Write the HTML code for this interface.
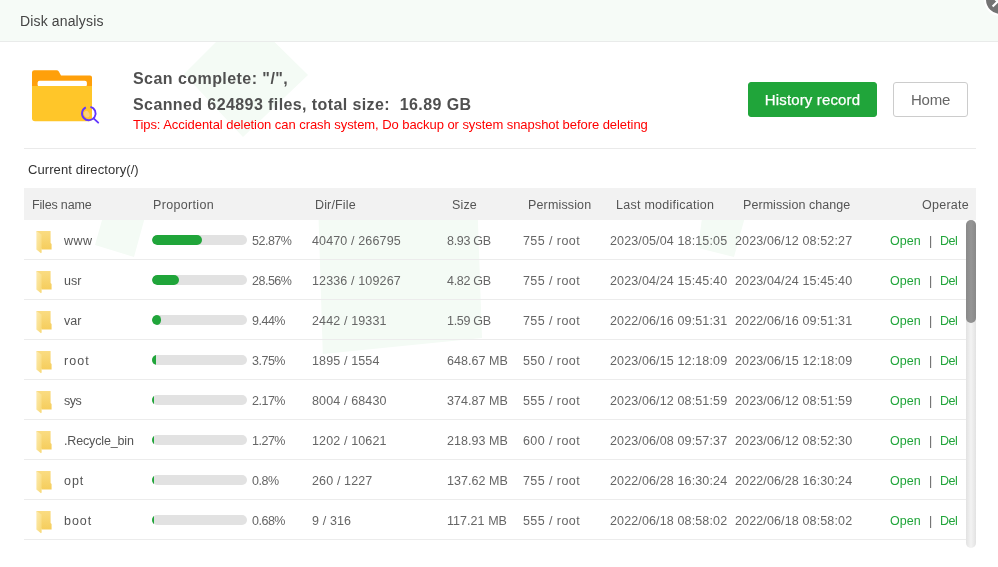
<!DOCTYPE html>
<html><head><meta charset="utf-8">
<style>
*{margin:0;padding:0;box-sizing:border-box}
html,body{width:998px;height:567px;overflow:hidden;background:#fff;font-family:"Liberation Sans",sans-serif;}
.abs{position:absolute;white-space:nowrap}
#hdr{position:absolute;left:0;top:0;width:998px;height:42px;background:#f6fbf7;border-bottom:1px solid #e9ebea}
#title{left:20px;top:13px;font-size:14px;color:#444;line-height:16px}
#close{position:absolute;left:983.5px;top:-17px;width:33px;height:33px;border-radius:50%;background:#737373;border:2.5px solid #fff}
.l1{left:133px;font-size:16px;font-weight:bold;color:#505050;line-height:18px}
.tips{left:133px;top:118px;font-size:13px;color:#ff0000;line-height:14px}
.btn{position:absolute;top:82px;height:35px;border-radius:3px;font-size:15px;line-height:33px;text-align:center}
#hist{left:748px;width:129px;background:#20a53a;color:#fff;border:1px solid #20a53a;letter-spacing:0.15px;-webkit-text-stroke:0.25px #fff}
#home{left:893px;width:75px;background:#fff;color:#666;border:1px solid #ccc;letter-spacing:-0.2px}
#sep{position:absolute;left:24px;top:148px;width:952px;height:1px;background:#eaeaea}
#cur{left:28px;top:163px;font-size:13px;color:#333;line-height:14px}
#thead{position:absolute;left:24px;top:188px;width:952px;height:32px;background:#f2f2f2}
.th{top:198px;font-size:12.5px;color:#555;line-height:14px}
.row{position:absolute;left:24px;width:942px;height:40px;border-bottom:1px solid #ececec}
.td{font-size:12.5px;color:#666;line-height:14px}
.bar{position:absolute;left:152px;width:95px;height:10px;border-radius:5px;background:#e2e2e2;overflow:hidden}
.bar i{position:absolute;left:0;top:0;height:10px;border-radius:5px;background:#20a53a}
.op{color:#20a53a}
.pipe{color:#666}
#sb{position:absolute;left:966px;top:220px;width:10px;height:328px;border-radius:5px;background:linear-gradient(to right,#e2e2e2,#f1f1f1 45%,#f1f1f1 55%,#e2e2e2)}
#thumb{position:absolute;left:966px;top:220px;width:10px;height:103px;border-radius:5px;background:linear-gradient(to right,#898989,#959595 50%,#898989)}
</style></head><body><div id="wrap" style="position:absolute;left:0;top:0;width:998px;height:567px;overflow:hidden;will-change:transform">
<svg width="0" height="0" style="position:absolute"><defs>
<linearGradient id="fb" x1="0" y1="0" x2="0" y2="1"><stop offset="0" stop-color="#fadc82"/><stop offset="1" stop-color="#f5cd5c"/></linearGradient>
<linearGradient id="ff" x1="0" y1="0" x2="1" y2="1"><stop offset="0" stop-color="#fdebb0"/><stop offset="1" stop-color="#f8d874"/></linearGradient>
</defs></svg>
<svg class="abs" style="left:0;top:0" width="998" height="567" viewBox="0 0 998 567"><g fill="#f4fbf5">
<polygon points="184,74 245,13 308,75 243,137"/>
<polygon points="111,188 153,188 134,257 95,245"/>
<polygon points="706,188 753,188 734,257 698,248"/>
<polygon points="318,200 477.2,200 482,338 322.8,354"/>
</g></svg>
<div id="hdr"></div>

<div id="close"></div>
<svg class="abs" style="left:985px;top:0" width="13" height="10" viewBox="985 0 13 10"><path d="M992.6 6.6 L1000 -0.8 M993.5 -2.5 L996.8 0.8" stroke="#fff" stroke-width="2.1"/></svg>

<!-- big folder icon -->
<svg class="abs" style="left:28px;top:64px" width="74" height="64" viewBox="28 64 74 64">
  <path d="M32 72.5 Q32 70.2 34.3 70.2 L56.5 70.2 Q58 70.2 58.8 71.6 L61 75.6 L90 75.6 Q92 75.6 92 77.6 L92 90 L32 90 Z" fill="#ffa00a"/>
  <rect x="37.6" y="80.7" width="49.3" height="6" rx="2" fill="#fff"/>
  <path d="M32 86 L92 86 L92 118.3 Q92 121.3 89 121.3 L35 121.3 Q32 121.3 32 118.3 Z" fill="#ffc629"/>
  <ellipse cx="86.8" cy="114.2" rx="2.6" ry="3.4" transform="rotate(-30 86.8 114.2)" fill="#fbd079"/>
  <path d="M90.45 106.8 A6.8 6.8 0 1 1 85.82 107.29" fill="none" stroke="#6236ff" stroke-width="1.9"/>
  <line x1="93.6" y1="118.4" x2="98.2" y2="122.6" stroke="#6236ff" stroke-width="1.9" stroke-linecap="round"/>
</svg>

<div class="abs" id="title" style="letter-spacing:0.142px">Disk analysis</div>
<div class="abs l1" style="top:70px;letter-spacing:0.444px">Scan complete: "/",</div>
<div class="abs l1" style="top:96px;letter-spacing:0.405px">Scanned 624893 files, total size:&nbsp; 16.89 GB</div>
<div class="abs tips" style="letter-spacing:-0.057px">Tips: Accidental deletion can crash system, Do backup or system snapshot before deleting</div>
<div class="abs" id="cur" style="letter-spacing:0.084px">Current directory(/)</div>

<div class="btn" id="hist">History record</div>
<div class="btn" id="home">Home</div>

<div id="sep"></div>


<div id="thead"></div>
<div class="abs th" style="left:32px;letter-spacing:-0.167px;">Files name</div>
<div class="abs th" style="left:153px;letter-spacing:0.333px;">Proportion</div>
<div class="abs th" style="left:315px;letter-spacing:0.15px;">Dir/File</div>
<div class="abs th" style="left:452px;letter-spacing:0.15px;">Size</div>
<div class="abs th" style="left:528px;letter-spacing:0.15px;">Permission</div>
<div class="abs th" style="left:616px;letter-spacing:0.263px;">Last modification</div>
<div class="abs th" style="left:743px;letter-spacing:0.062px;">Permission change</div>
<div class="abs th" style="left:922px;letter-spacing:0.25px;">Operate</div>

<div class="row" style="top:220px"></div>
<svg class="abs" style="left:36px;top:231px" width="16" height="23" viewBox="0 0 16 23"><path d="M0.4 0 L14.6 0 L14.6 12 L15.6 13 L15.6 18.6 L5.5 18.6 Z" fill="url(#fb)"/><path d="M0.4 0 L5.6 3.4 L5.6 21.6 L5 22.3 L0.4 18.6 Z" fill="url(#ff)"/></svg>
<div class="abs td" style="left:64px;top:234px;color:#555;letter-spacing:0.5px">www</div>
<div class="bar" style="top:235px"><i style="width:50.23px;"></i></div>
<div class="abs td" style="left:252px;top:234px;letter-spacing:-0.5px">52.87%</div>
<div class="abs td" style="left:312px;top:234px;letter-spacing:0.138px">40470 / 266795</div>
<div class="abs td" style="left:447px;top:234px;letter-spacing:-0.3px">8.93 GB</div>
<div class="abs td" style="left:523px;top:234px;letter-spacing:0.422px">755 / root</div>
<div class="abs td" style="left:610px;top:234px;letter-spacing:0.133px">2023/05/04 18:15:05</div>
<div class="abs td" style="left:735px;top:234px;letter-spacing:0.133px">2023/06/12 08:52:27</div>
<div class="abs td op" style="left:890px;top:234px">Open</div>
<div class="abs td pipe" style="left:929px;top:234px">|</div>
<div class="abs td op" style="left:940px;top:234px;letter-spacing:-0.5px">Del</div>
<div class="row" style="top:260px"></div>
<svg class="abs" style="left:36px;top:271px" width="16" height="23" viewBox="0 0 16 23"><path d="M0.4 0 L14.6 0 L14.6 12 L15.6 13 L15.6 18.6 L5.5 18.6 Z" fill="url(#fb)"/><path d="M0.4 0 L5.6 3.4 L5.6 21.6 L5 22.3 L0.4 18.6 Z" fill="url(#ff)"/></svg>
<div class="abs td" style="left:64px;top:274px;color:#555;letter-spacing:0px">usr</div>
<div class="bar" style="top:275px"><i style="width:27.13px;"></i></div>
<div class="abs td" style="left:252px;top:274px;letter-spacing:-0.5px">28.56%</div>
<div class="abs td" style="left:312px;top:274px;letter-spacing:0.138px">12336 / 109267</div>
<div class="abs td" style="left:447px;top:274px;letter-spacing:-0.3px">4.82 GB</div>
<div class="abs td" style="left:523px;top:274px;letter-spacing:0.422px">755 / root</div>
<div class="abs td" style="left:610px;top:274px;letter-spacing:0.133px">2023/04/24 15:45:40</div>
<div class="abs td" style="left:735px;top:274px;letter-spacing:0.133px">2023/04/24 15:45:40</div>
<div class="abs td op" style="left:890px;top:274px">Open</div>
<div class="abs td pipe" style="left:929px;top:274px">|</div>
<div class="abs td op" style="left:940px;top:274px;letter-spacing:-0.5px">Del</div>
<div class="row" style="top:300px"></div>
<svg class="abs" style="left:36px;top:311px" width="16" height="23" viewBox="0 0 16 23"><path d="M0.4 0 L14.6 0 L14.6 12 L15.6 13 L15.6 18.6 L5.5 18.6 Z" fill="url(#fb)"/><path d="M0.4 0 L5.6 3.4 L5.6 21.6 L5 22.3 L0.4 18.6 Z" fill="url(#ff)"/></svg>
<div class="abs td" style="left:64px;top:314px;color:#555;letter-spacing:0px">var</div>
<div class="bar" style="top:315px"><i style="width:8.97px;"></i></div>
<div class="abs td" style="left:252px;top:314px;letter-spacing:-0.5px">9.44%</div>
<div class="abs td" style="left:312px;top:314px;letter-spacing:0.138px">2442 / 19331</div>
<div class="abs td" style="left:447px;top:314px;letter-spacing:-0.3px">1.59 GB</div>
<div class="abs td" style="left:523px;top:314px;letter-spacing:0.422px">755 / root</div>
<div class="abs td" style="left:610px;top:314px;letter-spacing:0.133px">2022/06/16 09:51:31</div>
<div class="abs td" style="left:735px;top:314px;letter-spacing:0.133px">2022/06/16 09:51:31</div>
<div class="abs td op" style="left:890px;top:314px">Open</div>
<div class="abs td pipe" style="left:929px;top:314px">|</div>
<div class="abs td op" style="left:940px;top:314px;letter-spacing:-0.5px">Del</div>
<div class="row" style="top:340px"></div>
<svg class="abs" style="left:36px;top:351px" width="16" height="23" viewBox="0 0 16 23"><path d="M0.4 0 L14.6 0 L14.6 12 L15.6 13 L15.6 18.6 L5.5 18.6 Z" fill="url(#fb)"/><path d="M0.4 0 L5.6 3.4 L5.6 21.6 L5 22.3 L0.4 18.6 Z" fill="url(#ff)"/></svg>
<div class="abs td" style="left:64px;top:354px;color:#555;letter-spacing:1.05px">root</div>
<div class="bar" style="top:355px"><i style="width:3.56px;border-radius:0"></i></div>
<div class="abs td" style="left:252px;top:354px;letter-spacing:-0.5px">3.75%</div>
<div class="abs td" style="left:312px;top:354px;letter-spacing:0.138px">1895 / 1554</div>
<div class="abs td" style="left:447px;top:354px;letter-spacing:0.05px">648.67 MB</div>
<div class="abs td" style="left:523px;top:354px;letter-spacing:0.422px">550 / root</div>
<div class="abs td" style="left:610px;top:354px;letter-spacing:0.133px">2023/06/15 12:18:09</div>
<div class="abs td" style="left:735px;top:354px;letter-spacing:0.133px">2023/06/15 12:18:09</div>
<div class="abs td op" style="left:890px;top:354px">Open</div>
<div class="abs td pipe" style="left:929px;top:354px">|</div>
<div class="abs td op" style="left:940px;top:354px;letter-spacing:-0.5px">Del</div>
<div class="row" style="top:380px"></div>
<svg class="abs" style="left:36px;top:391px" width="16" height="23" viewBox="0 0 16 23"><path d="M0.4 0 L14.6 0 L14.6 12 L15.6 13 L15.6 18.6 L5.5 18.6 Z" fill="url(#fb)"/><path d="M0.4 0 L5.6 3.4 L5.6 21.6 L5 22.3 L0.4 18.6 Z" fill="url(#ff)"/></svg>
<div class="abs td" style="left:64px;top:394px;color:#555;letter-spacing:-0.5px">sys</div>
<div class="bar" style="top:395px"><i style="width:2.06px;border-radius:0"></i></div>
<div class="abs td" style="left:252px;top:394px;letter-spacing:-0.5px">2.17%</div>
<div class="abs td" style="left:312px;top:394px;letter-spacing:0.138px">8004 / 68430</div>
<div class="abs td" style="left:447px;top:394px;letter-spacing:0.05px">374.87 MB</div>
<div class="abs td" style="left:523px;top:394px;letter-spacing:0.422px">555 / root</div>
<div class="abs td" style="left:610px;top:394px;letter-spacing:0.133px">2023/06/12 08:51:59</div>
<div class="abs td" style="left:735px;top:394px;letter-spacing:0.133px">2023/06/12 08:51:59</div>
<div class="abs td op" style="left:890px;top:394px">Open</div>
<div class="abs td pipe" style="left:929px;top:394px">|</div>
<div class="abs td op" style="left:940px;top:394px;letter-spacing:-0.5px">Del</div>
<div class="row" style="top:420px"></div>
<svg class="abs" style="left:36px;top:431px" width="16" height="23" viewBox="0 0 16 23"><path d="M0.4 0 L14.6 0 L14.6 12 L15.6 13 L15.6 18.6 L5.5 18.6 Z" fill="url(#fb)"/><path d="M0.4 0 L5.6 3.4 L5.6 21.6 L5 22.3 L0.4 18.6 Z" fill="url(#ff)"/></svg>
<div class="abs td" style="left:64px;top:434px;color:#555;letter-spacing:-0.15px">.Recycle_bin</div>
<div class="bar" style="top:435px"><i style="width:1.6px;border-radius:0"></i></div>
<div class="abs td" style="left:252px;top:434px;letter-spacing:-0.5px">1.27%</div>
<div class="abs td" style="left:312px;top:434px;letter-spacing:0.138px">1202 / 10621</div>
<div class="abs td" style="left:447px;top:434px;letter-spacing:0.05px">218.93 MB</div>
<div class="abs td" style="left:523px;top:434px;letter-spacing:0.422px">600 / root</div>
<div class="abs td" style="left:610px;top:434px;letter-spacing:0.133px">2023/06/08 09:57:37</div>
<div class="abs td" style="left:735px;top:434px;letter-spacing:0.133px">2023/06/12 08:52:30</div>
<div class="abs td op" style="left:890px;top:434px">Open</div>
<div class="abs td pipe" style="left:929px;top:434px">|</div>
<div class="abs td op" style="left:940px;top:434px;letter-spacing:-0.5px">Del</div>
<div class="row" style="top:460px"></div>
<svg class="abs" style="left:36px;top:471px" width="16" height="23" viewBox="0 0 16 23"><path d="M0.4 0 L14.6 0 L14.6 12 L15.6 13 L15.6 18.6 L5.5 18.6 Z" fill="url(#fb)"/><path d="M0.4 0 L5.6 3.4 L5.6 21.6 L5 22.3 L0.4 18.6 Z" fill="url(#ff)"/></svg>
<div class="abs td" style="left:64px;top:474px;color:#555;letter-spacing:0.95px">opt</div>
<div class="bar" style="top:475px"><i style="width:1.6px;border-radius:0"></i></div>
<div class="abs td" style="left:252px;top:474px;letter-spacing:-0.5px">0.8%</div>
<div class="abs td" style="left:312px;top:474px;letter-spacing:0.138px">260 / 1227</div>
<div class="abs td" style="left:447px;top:474px;letter-spacing:0.05px">137.62 MB</div>
<div class="abs td" style="left:523px;top:474px;letter-spacing:0.422px">755 / root</div>
<div class="abs td" style="left:610px;top:474px;letter-spacing:0.133px">2022/06/28 16:30:24</div>
<div class="abs td" style="left:735px;top:474px;letter-spacing:0.133px">2022/06/28 16:30:24</div>
<div class="abs td op" style="left:890px;top:474px">Open</div>
<div class="abs td pipe" style="left:929px;top:474px">|</div>
<div class="abs td op" style="left:940px;top:474px;letter-spacing:-0.5px">Del</div>
<div class="row" style="top:500px"></div>
<svg class="abs" style="left:36px;top:511px" width="16" height="23" viewBox="0 0 16 23"><path d="M0.4 0 L14.6 0 L14.6 12 L15.6 13 L15.6 18.6 L5.5 18.6 Z" fill="url(#fb)"/><path d="M0.4 0 L5.6 3.4 L5.6 21.6 L5 22.3 L0.4 18.6 Z" fill="url(#ff)"/></svg>
<div class="abs td" style="left:64px;top:514px;color:#555;letter-spacing:0.95px">boot</div>
<div class="bar" style="top:515px"><i style="width:1.6px;border-radius:0"></i></div>
<div class="abs td" style="left:252px;top:514px;letter-spacing:-0.5px">0.68%</div>
<div class="abs td" style="left:312px;top:514px;letter-spacing:0.138px">9 / 316</div>
<div class="abs td" style="left:447px;top:514px;letter-spacing:0.05px">117.21 MB</div>
<div class="abs td" style="left:523px;top:514px;letter-spacing:0.422px">555 / root</div>
<div class="abs td" style="left:610px;top:514px;letter-spacing:0.133px">2022/06/18 08:58:02</div>
<div class="abs td" style="left:735px;top:514px;letter-spacing:0.133px">2022/06/18 08:58:02</div>
<div class="abs td op" style="left:890px;top:514px">Open</div>
<div class="abs td pipe" style="left:929px;top:514px">|</div>
<div class="abs td op" style="left:940px;top:514px;letter-spacing:-0.5px">Del</div>

<div id="sb"></div>
<div id="thumb"></div>

</div></body></html>
